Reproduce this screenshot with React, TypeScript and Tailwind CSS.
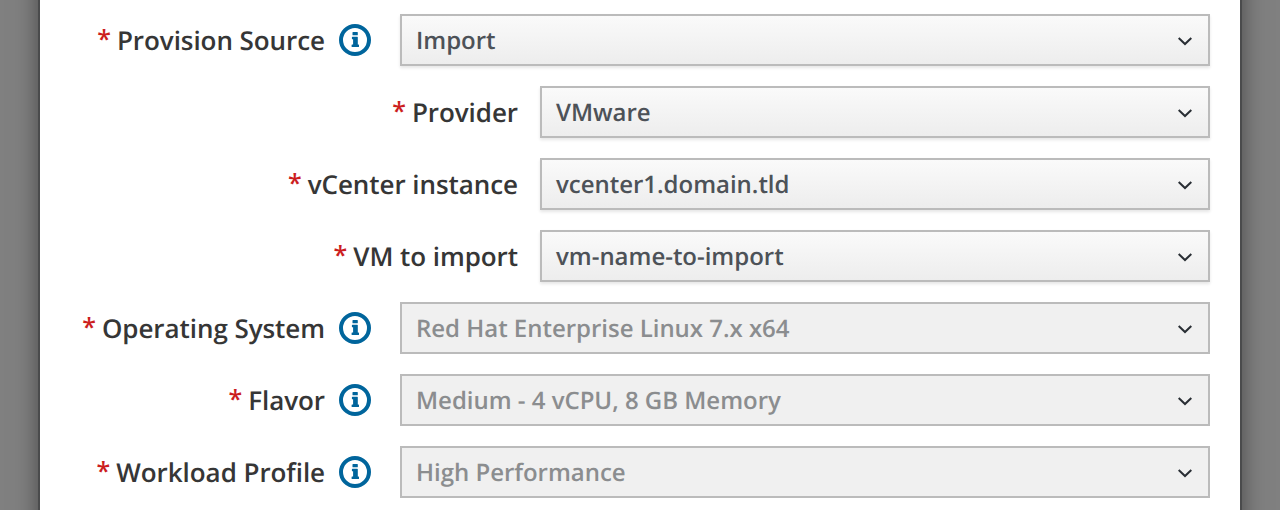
type Field = { label: string; value: string; info?: boolean; nested?: boolean; disabled?: boolean };

const fields: Field[] = [
  { label: "Provision Source", value: "Import", info: true },
  { label: "Provider", value: "VMware", nested: true },
  { label: "vCenter instance", value: "vcenter1.domain.tld", nested: true },
  { label: "VM to import", value: "vm-name-to-import", nested: true },
  { label: "Operating System", value: "Red Hat Enterprise Linux 7.x x64", info: true, disabled: true },
  { label: "Flavor", value: "Medium - 4 vCPU, 8 GB Memory", info: true, disabled: true },
  { label: "Workload Profile", value: "High Performance", info: true, disabled: true },
];

function InfoIcon() {
  return (
    <svg className="ml-3.5 mr-[29px] size-8 shrink-0" viewBox="0 0 32 32" fill="none">
      <circle cx="16" cy="16" r="14" stroke="#00659c" strokeWidth="4" />
      <path
        fill="#00659c"
        d="M14 8h4.300q.5 0 .5.500v2.300q0 .5-.5.500H14q-.5 0-.5-.5V8.500q0-.5.500-.5zM13.400 12.800h4.900q.5 0 .5.500v7.200h.7q.5 0 .5.500v1.500q0 .5-.5.500h-6.400q-.5 0-.5-.5V21q0-.5.500-.5h1v-5.200h-.7q-.5 0-.5-.5v-1.500q0-.5.500-.5z"
      />
    </svg>
  );
}

function Row({ field }: { field: Field }) {
  return (
    <div className="flex h-[52px] items-center">
      <div className={`flex shrink-0 items-center justify-end ${field.nested ? "w-[500px] pr-[22px]" : "w-[360px]"}`}>
        <span className="mr-1.5 -mt-[3px] text-[25px] leading-[36px] text-[#cc1e1e]">*</span>
        <span className="whitespace-nowrap text-[26px] leading-[36px] tracking-[-0.06px] text-[#363636]">{field.label}</span>
        {field.info && <InfoIcon />}
      </div>
      <div
        className={`flex h-[52px] grow items-center justify-between border-2 border-[#bbb] pl-3.5 pr-[15px] text-[24px] leading-[36px] ${
          field.disabled
            ? "bg-[#f0f0f0] text-[#8b8d8f]"
            : "bg-linear-to-b from-[#fafafa] to-[#ededed] text-[#4d5258] shadow-[0_2px_3px_rgba(3,3,3,0.1)]"
        }`}
      >
        <span className="mt-[2px] whitespace-nowrap tracking-[-0.02px]">{field.value}</span>
        <svg className="mt-[2px] h-4 w-4" viewBox="0 0 16 16" fill="none">
          <path d="M1.700 5l6.300 6 6.300-6" stroke="#292e34" strokeWidth="2" />
        </svg>
      </div>
    </div>
  );
}

export default function App() {
  return (
    <div className="flex h-[510px] justify-center overflow-hidden bg-[#808080] font-['Open_Sans',sans-serif] font-semibold antialiased [text-rendering:geometricPrecision]">
      <main className="-mt-[50px] flex h-[610px] w-[1200px] shrink-0 flex-col gap-5 bg-white pr-[30px] pt-16 shadow-[0_0_0_2px_#4a4b4c,0_0_24px_rgba(0,0,0,0.5)]">
        {fields.map((field) => (
          <Row key={field.label} field={field} />
        ))}
      </main>
    </div>
  );
}
